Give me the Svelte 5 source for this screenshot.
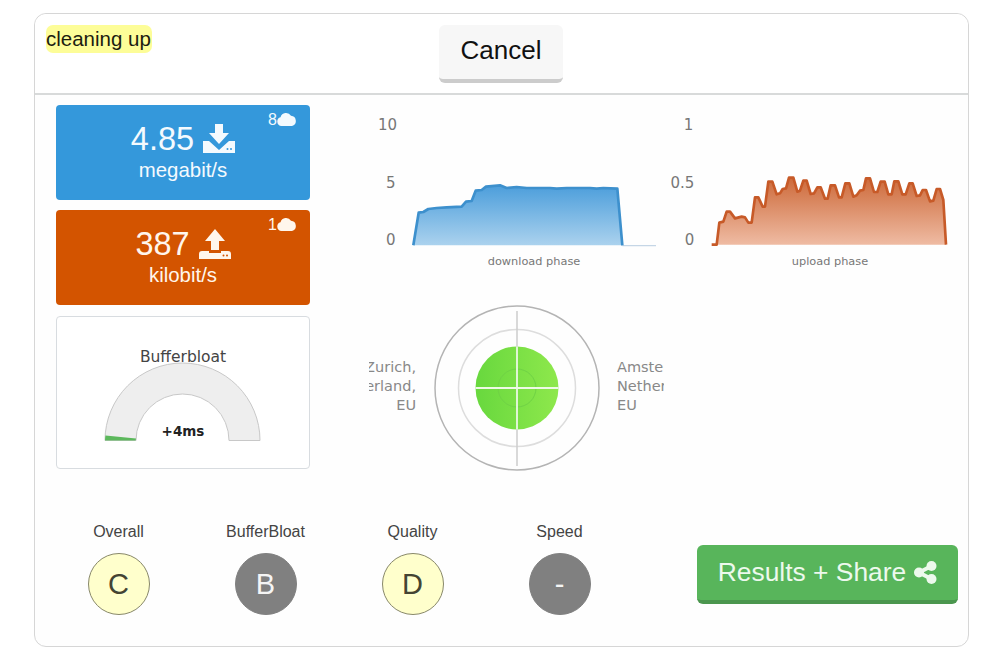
<script>
	const download = '160,436 176,338 190,336 205,327 230,324 260,322 305,320 318,305 335,303 347,272 365,270 378,260 420,256 440,264 470,261 500,264 570,264 590,266 620,264 690,264 710,266 730,264 772,266 787,436';
	const upload = '155,434 170,434 178,368 190,365 200,335 210,335 225,355 245,350 255,352 265,368 275,368 285,292 295,292 308,320 315,320 325,245 337,245 350,283 360,280 368,267 378,265 387,233 400,233 412,275 420,272 430,242 440,242 452,282 462,280 472,262 482,262 495,296 503,296 512,256 525,256 537,292 545,292 556,250 568,250 580,290 590,286 600,272 610,270 618,235 630,235 642,276 652,276 662,245 674,245 685,283 695,283 703,244 715,244 727,283 737,283 748,250 758,250 770,288 780,286 788,270 798,270 810,304 820,302 830,267 840,267 850,300 858,434';

	const grades = [
		{ label: 'Overall', value: 'C', dark: false },
		{ label: 'BufferBloat', value: 'B', dark: true },
		{ label: 'Quality', value: 'D', dark: false },
		{ label: 'Speed', value: '-', dark: true }
	];

	const cloud = 'M4.500 15A4.500 4.500 0 0 1 3.500 6.200 5.800 5.800 0 0 1 14 4.800 5.200 5.200 0 0 1 15 15Z';
</script>

<div class="card">
	<header class="top">
		<div class="status-cell"><span class="status">cleaning up</span></div>
		<button type="button" class="cancel">Cancel</button>
	</header>

	<div class="main">
		<div class="left">
			<div class="speed blue">
				<div class="servers">8<svg viewBox="0 0 20 15" class="cloud"><path d={cloud} /></svg></div>
				<div class="value">
					4.85
					<svg viewBox="0 0 32 30" class="dir">
						<path d="M12 0h8v9h6L16 20 6 9h6z" />
						<path d="M0 17h6l10 9 10-9h6v12H0z" />
						<circle cx="24.500" cy="25" r="1" fill="#3498db" />
						<circle cx="28" cy="25" r="1" fill="#3498db" />
					</svg>
				</div>
				<div class="unit">megabit/s</div>
			</div>

			<div class="speed orange">
				<div class="servers">1<svg viewBox="0 0 20 15" class="cloud"><path d={cloud} /></svg></div>
				<div class="value">
					387
					<svg viewBox="0 0 32 30" class="dir">
						<path d="M16 0l10 12h-6v9h-8v-9H6z" />
						<path d="M0 25q0-3 3-3h7v2h12v-2h7q3 0 3 3v5H0z" />
						<circle cx="24.500" cy="26.500" r="1" fill="#d35400" />
						<circle cx="28" cy="26.500" r="1" fill="#d35400" />
					</svg>
				</div>
				<div class="unit">kilobit/s</div>
			</div>

			<div class="gauge">
				<svg viewBox="0 0 252 151" width="252" height="151">
					<text x="126" y="44.500" text-anchor="middle" class="gauge-title">Bufferbloat</text>
					<path d="M48 123.500a77.500 77.500 0 0 1 155 0h-31a46.500 46.500 0 0 0-93 0z" fill="#eeeeee" stroke="#c8c8c8" />
					<path d="M48 123.500q0-2.500 .5-5l30.500 3q0 1-.5 2z" fill="#5cb85c" />
					<text x="126" y="119" text-anchor="middle" class="gauge-value">+4ms</text>
				</svg>
			</div>
		</div>

		<div class="right">
			<div class="charts">
				<svg viewBox="0 15 900 525" width="300" height="175">
					<defs>
						<linearGradient id="blue-fill" x1="0" y1="0" x2="0" y2="1">
							<stop offset="0" stop-color="#4c9edb" />
							<stop offset="1" stop-color="#abd2ee" />
						</linearGradient>
						<linearGradient id="orange-fill" x1="0" y1="0" x2="0" y2="1">
							<stop offset="0" stop-color="#cd6a3a" />
							<stop offset="1" stop-color="#efbba3" />
						</linearGradient>
					</defs>
					<text x="111" y="89" text-anchor="end" class="axis">10</text>
					<text x="107" y="265" text-anchor="end" class="axis">5</text>
					<text x="107" y="435" text-anchor="end" class="axis">0</text>
					<line x1="787" y1="437" x2="888" y2="437" stroke="#c5d6e6" stroke-width="4" />
					<polygon points={download} fill="url(#blue-fill)" />
					<polyline points={download} fill="none" stroke="#3d90cd" stroke-width="8" stroke-linejoin="round" />
					<text x="522" y="495" text-anchor="middle" class="phase">download phase</text>
				</svg>
				<svg viewBox="0 15 900 525" width="300" height="175">
					<text x="100" y="89" text-anchor="end" class="axis">1</text>
					<text x="103" y="265" text-anchor="end" class="axis">0.5</text>
					<text x="103" y="435" text-anchor="end" class="axis">0</text>
					<polygon points={upload} fill="url(#orange-fill)" />
					<polyline points={upload} fill="none" stroke="#c75a28" stroke-width="8" stroke-linejoin="round" />
					<text x="510" y="495" text-anchor="middle" class="phase">upload phase</text>
				</svg>
			</div>

			<div class="radar">
				<div class="city from">
					<span>Zurich,</span>
					<span>Switzerland,</span>
					<span>EU</span>
				</div>
				<svg viewBox="0 0 170 170" width="170" height="170" class="rings">
					<defs>
						<linearGradient id="green-fill" x1="0" y1="0" x2="1" y2="0">
							<stop offset="0" stop-color="#68d83e" />
							<stop offset="1" stop-color="#8ee84c" />
						</linearGradient>
					</defs>
					<circle cx="85" cy="85" r="82" fill="none" stroke="#b4b4b4" stroke-width="1.500" />
					<circle cx="85" cy="85" r="58.500" fill="none" stroke="#dddddd" stroke-width="1.500" />
					<circle cx="85" cy="85" r="41.500" fill="url(#green-fill)" />
					<circle cx="85" cy="85" r="19" fill="none" stroke="#6fd245" stroke-width="1" />
					<line x1="85" y1="8" x2="85" y2="163" stroke="#cccccc" stroke-width="1.500" />
					<line x1="85" y1="43.500" x2="85" y2="126.500" stroke="#dff5d4" stroke-width="2" />
					<line x1="43.500" y1="85" x2="126.500" y2="85" stroke="#eefae6" stroke-width="2" />
				</svg>
				<div class="city to">
					<span>Amsterdam,</span>
					<span>Netherlands,</span>
					<span>EU</span>
				</div>
			</div>
		</div>
	</div>

	<div class="bottom">
		<div class="grades">
			{#each grades as grade (grade.label)}
				<div class="grade">
					<div class="grade-label">{grade.label}</div>
					<div class="circle" class:dark={grade.dark}>{grade.value}</div>
				</div>
			{/each}
		</div>
		<button type="button" class="share">
			Results + Share
			<svg viewBox="0 0 24 24" class="share-icon">
				<line x1="18.500" y1="5.500" x2="6" y2="12" />
				<line x1="18.500" y1="18.500" x2="6" y2="12" />
				<circle cx="18.500" cy="5.500" r="5" />
				<circle cx="6" cy="12" r="5" />
				<circle cx="18.500" cy="18.500" r="5" />
			</svg>
		</button>
	</div>
</div>

<style>
	:global(body) {
		background: #ffffff;
		font-family: 'Liberation Sans', Arial, sans-serif;
	}

	.card {
		box-sizing: border-box;
		width: 935px;
		height: 634px;
		margin: 13px 0 0 34px;
		border: 1px solid #d6d6d6;
		border-radius: 12px;
		background: #fefefe;
		display: flex;
		flex-direction: column;
	}

	.top {
		display: grid;
		grid-template-columns: 404px auto 1fr;
		height: 79px;
		border-bottom: 2px solid #d8dada;
		background: #ffffff;
		border-radius: 12px 12px 0 0;
	}

	.status-cell {
		padding: 11px 0 0 11px;
	}

	.status {
		display: inline-block;
		padding: 0 1px 0 0;
		height: 28px;
		line-height: 27px;
		font-size: 20.500px;
		color: #1c1c10;
		background: #fdfd98;
		border-radius: 7px;
	}

	.cancel {
		box-sizing: border-box;
		width: 124px;
		height: 58px;
		margin-top: 11px;
		padding-bottom: 5px;
		background: #f7f7f7;
		border: none;
		border-bottom: 4px solid #cccccc;
		border-radius: 6px;
		font-family: inherit;
		font-size: 26px;
		color: #111111;
	}

	.main {
		display: flex;
		padding: 10px 0 0 21px;
		height: 407px;
	}

	.left {
		width: 254px;
		display: flex;
		flex-direction: column;
		gap: 10px;
	}

	.speed {
		position: relative;
		height: 95px;
		border-radius: 4px;
		color: #f4fafe;
		text-align: center;
		padding-top: 17px;
		box-sizing: border-box;
	}

	.blue {
		background: #3498db;
	}

	.orange {
		background: #d35400;
		color: #fff6ec;
	}

	.servers {
		position: absolute;
		top: 6px;
		right: 13px;
		display: flex;
		align-items: flex-start;
		font-size: 16px;
		line-height: 18px;
	}

	.cloud {
		width: 20px;
		height: 15px;
		fill: currentColor;
	}

	.value {
		display: flex;
		justify-content: center;
		align-items: center;
		gap: 9px;
		font-size: 32.500px;
		line-height: 34px;
	}

	.dir {
		width: 32px;
		height: 30px;
		fill: currentColor;
	}

	.unit {
		font-size: 20.400px;
		line-height: 24px;
		margin-top: 2px;
	}

	.gauge {
		box-sizing: border-box;
		height: 153px;
		margin-top: 1px;
		border: 1px solid #d8dce0;
		border-radius: 4px;
		background: #ffffff;
	}

	.gauge svg {
		display: block;
	}

	.gauge-title {
		font-family: 'DejaVu Sans', sans-serif;
		font-size: 15.500px;
		fill: #444444;
	}

	.gauge-value {
		font-family: 'DejaVu Sans', sans-serif;
		font-weight: bold;
		font-size: 13.500px;
		fill: #222222;
	}

	.right {
		margin-left: 50px;
		width: 600px;
	}

	.charts {
		display: flex;
		height: 175px;
	}

	.charts svg {
		display: block;
		flex: none;
	}

	.axis {
		font-family: 'DejaVu Sans', sans-serif;
		font-size: 45px;
		fill: #777777;
	}

	.phase {
		font-family: 'DejaVu Sans', sans-serif;
		font-size: 34px;
		fill: #777777;
	}

	.radar {
		display: flex;
		align-items: center;
		width: 295px;
		margin: 23px 0 0 9px;
	}

	.rings {
		display: block;
		flex: none;
		margin: 0 15px 0 16px;
	}

	.city {
		width: 47px;
		flex: none;
		overflow: hidden;
		display: flex;
		flex-direction: column;
		margin-top: -4px;
		font-family: 'DejaVu Sans', sans-serif;
		font-size: 14.500px;
		line-height: 19px;
		color: #888888;
		white-space: nowrap;
	}

	.from {
		align-items: flex-end;
	}

	.to {
		align-items: flex-start;
	}

	.bottom {
		display: flex;
		align-items: flex-start;
		padding: 10px 10px 0 10px;
	}

	.grades {
		display: grid;
		grid-template-columns: repeat(4, 147px);
	}

	.grade {
		display: flex;
		flex-direction: column;
		align-items: center;
	}

	.grade-label {
		font-size: 16px;
		line-height: 20px;
		color: #444444;
	}

	.circle {
		box-sizing: border-box;
		width: 62px;
		height: 62px;
		margin-top: 11px;
		border: 1px solid #88886a;
		border-radius: 50%;
		background: #ffffcc;
		color: #444433;
		font-size: 29px;
		display: flex;
		align-items: center;
		justify-content: center;
	}

	.circle.dark {
		border-color: #808080;
		background: #808080;
		color: #f5f5f5;
	}

	.share {
		box-sizing: border-box;
		display: flex;
		align-items: center;
		justify-content: center;
		gap: 7px;
		width: 261px;
		height: 59px;
		margin: 23px 0 0 auto;
		background: #58b55b;
		border: none;
		border-bottom: 4px solid #4b964e;
		border-radius: 6px;
		font-family: inherit;
		font-size: 26.400px;
		color: #edf9ed;
	}

	.share-icon {
		width: 24px;
		height: 25px;
		fill: currentColor;
		stroke: currentColor;
		stroke-width: 0;
	}

	.share-icon line {
		stroke-width: 4;
	}
</style>
